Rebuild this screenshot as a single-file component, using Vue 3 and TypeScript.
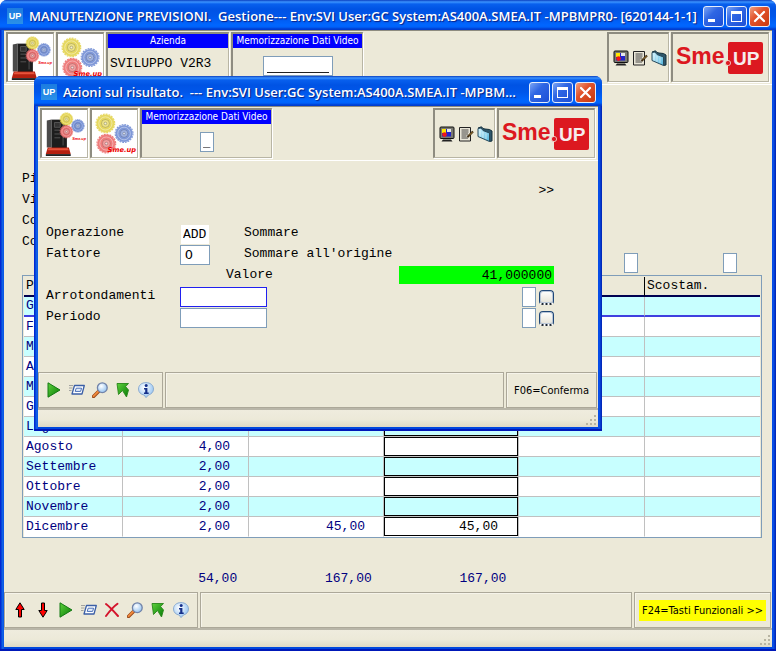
<script setup lang="ts">
import { ref } from 'vue'

interface MonthRow {
  name: string
  base: string
  previous: string
  forecast: string
}

const months = ref<MonthRow[]>([
  { name: 'Gennaio', base: '', previous: '', forecast: '' },
  { name: 'Febbraio', base: '', previous: '', forecast: '' },
  { name: 'Marzo', base: '', previous: '', forecast: '' },
  { name: 'Aprile', base: '', previous: '', forecast: '' },
  { name: 'Maggio', base: '', previous: '', forecast: '' },
  { name: 'Giugno', base: '', previous: '', forecast: '' },
  { name: 'Luglio', base: '', previous: '', forecast: '' },
  { name: 'Agosto', base: '4,00', previous: '', forecast: '' },
  { name: 'Settembre', base: '2,00', previous: '', forecast: '' },
  { name: 'Ottobre', base: '2,00', previous: '', forecast: '' },
  { name: 'Novembre', base: '2,00', previous: '', forecast: '' },
  { name: 'Dicembre', base: '2,00', previous: '45,00', forecast: '45,00' },
])

const headLines: string[] = ['Pi', 'Vi', 'Co', 'Co']
const totals: string[] = ['', '54,00', '167,00', '167,00']

const mainTools: string[] = ['up', 'down', 'play', 'send', 'cross', 'lens', 'back', 'info']
const dialogTools: string[] = ['play', 'send', 'lens', 'back', 'info']
const sideTools: string[] = ['monitor', 'notes', 'folder']

const operation = ref('ADD')
const factor = ref('O')
const rounding = ref('')
const roundingCode = ref('')
const period = ref('')
const periodCode = ref('')
const filterA = ref('')
const filterB = ref('')
const storeMain = ref('')
const storeDialog = ref('_')
</script>

<template>
  <svg class="defs" width="0" height="0" aria-hidden="true">
    <defs>
      <linearGradient id="g-green" x1="0" y1="0" x2="1" y2="1">
        <stop offset="0" stop-color="#5fd23c" /><stop offset="1" stop-color="#067a06" />
      </linearGradient>
      <radialGradient id="g-glass" cx=".4" cy=".35" r=".7">
        <stop offset="0" stop-color="#ffffff" /><stop offset="1" stop-color="#8fc0f0" />
      </radialGradient>
      <linearGradient id="g-folder" x1="0" y1="0" x2="1" y2="1">
        <stop offset="0" stop-color="#d8f6ff" /><stop offset="1" stop-color="#4fb4dc" />
      </linearGradient>
    </defs>
    <symbol id="up" viewBox="0 0 16 16">
      <path d="M8 .8 12.2 7.500H9.500V15H6.500V7.500H3.800Z" fill="#f00" stroke="#000" />
    </symbol>
    <symbol id="down" viewBox="0 0 16 16">
      <path d="M8 15.200 3.800 8.500H6.500V1H9.500V8.500H12.200Z" fill="#f00" stroke="#000" />
    </symbol>
    <symbol id="play" viewBox="0 0 16 16">
      <path d="M2 .8 14 8 2 15.200Z" fill="url(#g-green)" stroke="#157a15" />
    </symbol>
    <symbol id="send" viewBox="0 0 16 16">
      <path d="M5.500 3.500H15.300L13 12H3Z" fill="#fff" stroke="#3b5fa6" stroke-width="1.300" stroke-linejoin="round" />
      <path d="M7.200 6.200H12.600L11.600 9.400H6.200Z" fill="#e3edfb" stroke="#4a70b8" />
      <path d="M0 3.500H4M0 6H3.500M0 8.500H2.500" stroke="#9a9a9a" stroke-width=".9" />
    </symbol>
    <symbol id="cross" viewBox="0 0 16 16">
      <path d="M2 2C6 5 10 9.500 14 14M13.500 1.800C9 5 5 10 2 14" fill="none" stroke="#d4142c" stroke-width="2" stroke-linecap="round" />
    </symbol>
    <symbol id="lens" viewBox="0 0 16 16">
      <path d="M1.500 14.500 6.500 9.500" stroke="#9a4a1c" stroke-width="3.400" stroke-linecap="round" />
      <path d="M1.600 14.100 6.200 9.500" stroke="#f08a3c" stroke-width="1.800" stroke-linecap="round" />
      <circle cx="10.300" cy="5.700" r="4.900" fill="url(#g-glass)" stroke="#7283a8" stroke-width="1.300" />
    </symbol>
    <symbol id="back" viewBox="0 0 16 16">
      <path d="M2 1.500H13.500L10.600 4.600 13.500 8 11.500 15 7.500 8.500 3.500 12.500Z" fill="url(#g-green)" stroke="#28861a" stroke-width=".9" stroke-linejoin="round" />
    </symbol>
    <symbol id="info" viewBox="0 0 16 16">
      <path d="M8 .6C12.400 .6 15.500 3.200 15.500 7 15.500 10.200 13.200 12.200 10.500 13L8 15.600 6.200 13.100C2.900 12.500 .5 10.300 .5 7 .5 3.200 3.600 .6 8 .6Z" fill="url(#g-glass)" stroke="#86a6cc" stroke-width=".9" />
      <circle cx="8.200" cy="3.400" r="1.500" fill="#15308a" />
      <path d="M6 6H9.400V10.500H10.700V12H6V10.500H7.200V7.400H6Z" fill="#15308a" />
    </symbol>
    <symbol id="monitor" viewBox="0 0 16 16">
      <rect x="1" y="1" width="14" height="11.500" rx="1" fill="#7a7a72" stroke="#111" />
      <rect x="3" y="3" width="9" height="7.500" fill="#2323c8" />
      <rect x="3" y="3" width="4" height="4" fill="#ffe600" />
      <circle cx="5.500" cy="8.600" r="2.300" fill="#f01818" />
      <rect x="8" y="3" width="4" height="3" fill="#e8e8e8" />
      <path d="M4 13.500H12L13.500 15.500H2.500Z" fill="#222" />
    </symbol>
    <symbol id="notes" viewBox="0 0 16 16">
      <path d="M1.500 1.500H12.500V15H1.500Z" fill="#e9e6d8" stroke="#222" />
      <path d="M3.500 4H10.500M3.500 6H10.500M3.500 8H10M3.500 10H8.500M3.500 12H10" stroke="#333" stroke-width=".9" />
      <path d="M9.500 11 15 5.500" stroke="#3a2a10" stroke-width="2.200" />
      <path d="M11 9.500 14.500 6" stroke="#c89848" stroke-width=".8" />
    </symbol>
    <symbol id="folder" viewBox="0 0 16 16">
      <path d="M1 2 4.500 .8 6 2.500 8 3 12.500 3.500 15 5V15L12.500 15.500" fill="#2e566a" stroke="#14303c" />
      <path d="M1 2.500 4 2 6 4.500 12.500 7V15.500L1 10.500Z" fill="url(#g-folder)" stroke="#28485a" />
      <path d="M3 4.500V10.500M6 6V12M9 7.500V13.200" stroke="#fff" stroke-width=".7" opacity=".7" />
    </symbol>
    <symbol id="gear" viewBox="0 0 24 24">
      <circle cx="12" cy="12" r="10.600" fill="none" stroke="currentColor" stroke-width="1.400" stroke-dasharray="2.200 1.130" />
      <circle cx="12" cy="12" r="10.200" fill="currentColor" />
      <circle cx="12" cy="12" r="7.500" fill="none" stroke="#fff" stroke-opacity=".45" />
      <circle cx="12" cy="12" r="4.500" fill="#fff" fill-opacity=".25" stroke="#000" stroke-opacity=".2" />
      <circle cx="12" cy="12" r="1.500" fill="#fff" fill-opacity=".6" stroke="#000" stroke-opacity=".25" />
    </symbol>
    <symbol id="server" viewBox="0 0 47 47">
      <path d="M5 10 10 9V38H5Z" fill="#4a4a4a" />
      <path d="M10 9H26V39H10Z" fill="#1d1d1d" />
      <path d="M13 12H19V17H13ZM13 20H19M13 24H19M13 28H19M22 12V36" stroke="#555" fill="#333" />
      <path d="M6 38H28L30 45H4Z" fill="#b5200f" />
      <path d="M7 39H27L28 41H6Z" fill="#e8543c" />
      <path d="M4 45H30V47H4Z" fill="#222" />
      <use href="#gear" x="18" y="1" width="15" height="15" color="#e4d452" />
      <use href="#gear" x="30" y="8" width="15" height="15" color="#7590d4" />
      <use href="#gear" x="18" y="14" width="15" height="15" color="#e87070" />
      <text x="46" y="30" text-anchor="end" font-family="Liberation Sans" font-weight="700" font-style="italic" font-size="4" fill="#e00">Sme.up</text>
    </symbol>
    <symbol id="gears" viewBox="0 0 47 47">
      <use href="#gear" x="3" y="2" width="22" height="22" color="#e6d860" />
      <use href="#gear" x="23" y="13" width="21" height="21" color="#7f98d8" />
      <use href="#gear" x="4" y="23" width="22" height="22" color="#ee7c7c" />
      <text x="46" y="43" text-anchor="end" font-family="DejaVu Sans" font-weight="700" font-style="italic" font-size="7" fill="#e00">Sme.up</text>
    </symbol>
    <symbol id="logo" viewBox="0 0 90 36">
      <rect x="53" y="2" width="35" height="32" rx="2" fill="#dc1820" />
      <text x="1" y="24" font-family="Liberation Sans" font-weight="700" font-size="23" fill="#dc1820">Sme</text>
      <circle cx="53" cy="23" r="2.600" fill="#dc1820" stroke="#f2e6dc" stroke-width=".8" />
      <text x="58" y="25" font-family="Liberation Sans" font-weight="700" font-size="19" fill="#f6ecec">UP</text>
    </symbol>
  </svg>

  <div class="desktop">
    <main class="window main-window">
      <header class="titlebar">
        <span class="badge">UP</span>
        <h1 class="title">MANUTENZIONE PREVISIONI.&nbsp; Gestione--- Env:SVI User:GC System:AS400A.SMEA.IT -MPBMPR0- [620144-1-1]</h1>
        <button class="cap" type="button" aria-label="Riduci"><i class="min"></i></button>
        <button class="cap" type="button" aria-label="Ingrandisci"><i class="max"></i></button>
        <button class="cap close" type="button" aria-label="Chiudi">
          <svg viewBox="0 0 13 13" width="13" height="13"><path d="M2 2 11 11M11 2 2 11" stroke="#fff" stroke-width="2.200" stroke-linecap="round" /></svg>
        </button>
      </header>

      <section class="toolbar">
        <div class="cell pic"><svg width="45" height="47"><use href="#server" /></svg></div>
        <div class="cell pic"><svg width="45" height="47"><use href="#gears" /></svg></div>
        <div class="cell field-cell company">
          <div class="caption">Azienda</div>
          <div class="mono company-name">SVILUPPO V2R3</div>
        </div>
        <div class="cell field-cell">
          <label class="caption" for="store-main">Memorizzazione Dati Video</label>
          <input id="store-main" v-model="storeMain" class="mono box store-wide" type="text" />
        </div>
        <div class="spacer"></div>
        <div class="cell side">
          <button v-for="t in sideTools" :key="t" class="tool" type="button" :aria-label="t">
            <svg width="16" height="16"><use :href="'#' + t" /></svg>
          </button>
        </div>
        <div class="cell brand"><svg width="90" height="36"><use href="#logo" /></svg></div>
      </section>

      <section class="content main-content">
        <div class="head-lines mono">
          <p v-for="(line, i) in headLines" :key="i">{{ line }}</p>
        </div>
        <div class="filters">
          <input v-model="filterA" class="box code" type="text" aria-label="Filtro differenza" />
          <input v-model="filterB" class="box code" type="text" aria-label="Filtro scostamento" />
        </div>
        <div class="table-frame">
          <table class="mono">
            <colgroup>
              <col class="c-name" /><col class="c-base" /><col class="c-num" /><col class="c-num" /><col class="c-base" /><col />
            </colgroup>
            <thead>
              <tr>
                <th>Periodo</th><th></th><th></th><th></th><th></th><th>Scostam.</th>
              </tr>
            </thead>
            <tbody>
              <tr v-for="(m, i) in months" :key="m.name" :class="{ current: i === 0 }">
                <td>{{ m.name }}</td>
                <td class="num">{{ m.base }}</td>
                <td class="num">{{ m.previous }}</td>
                <td class="edit"><input v-model="m.forecast" class="mono" type="text" :aria-label="m.name" /></td>
                <td></td>
                <td></td>
              </tr>
            </tbody>
          </table>
        </div>
        <div class="totals mono">
          <span v-for="(t, i) in totals" :key="i">{{ t }}</span>
        </div>
      </section>

      <footer>
        <div class="actions">
          <div class="pane tools">
            <button v-for="t in mainTools" :key="t" class="tool" type="button" :aria-label="t">
              <svg width="16" height="16"><use :href="'#' + t" /></svg>
            </button>
          </div>
          <div class="pane fill"></div>
          <div class="pane key-pane"><button class="key lit" type="button">F24=Tasti Funzionali &gt;&gt;</button></div>
        </div>
        <div class="status">
          <svg width="12" height="12" fill="#b8b4a2"><path d="M8 0h2v2h-2zM4 4h2v2h-2zM8 4h2v2h-2zM0 8h2v2h-2zM4 8h2v2h-2zM8 8h2v2h-2z" /></svg>
        </div>
      </footer>
    </main>

    <section class="window dialog" role="dialog" aria-label="Azioni sul risultato">
      <header class="titlebar">
        <span class="badge">UP</span>
        <h2 class="title">Azioni sul risultato.&nbsp; --- Env:SVI User:GC System:AS400A.SMEA.IT -MPBM...</h2>
        <button class="cap" type="button" aria-label="Riduci"><i class="min"></i></button>
        <button class="cap" type="button" aria-label="Ingrandisci"><i class="max"></i></button>
        <button class="cap close" type="button" aria-label="Chiudi">
          <svg viewBox="0 0 13 13" width="13" height="13"><path d="M2 2 11 11M11 2 2 11" stroke="#fff" stroke-width="2.200" stroke-linecap="round" /></svg>
        </button>
      </header>

      <div class="toolbar">
        <div class="cell pic"><svg width="45" height="47"><use href="#server" /></svg></div>
        <div class="cell pic"><svg width="45" height="47"><use href="#gears" /></svg></div>
        <div class="cell field-cell">
          <label class="caption" for="store-dialog">Memorizzazione Dati Video</label>
          <input id="store-dialog" v-model="storeDialog" class="mono box code" type="text" />
        </div>
        <div class="spacer"></div>
        <div class="cell side">
          <button v-for="t in sideTools" :key="t" class="tool" type="button" :aria-label="t">
            <svg width="16" height="16"><use :href="'#' + t" /></svg>
          </button>
        </div>
        <div class="cell brand"><svg width="90" height="36"><use href="#logo" /></svg></div>
      </div>

      <form class="content form mono" @submit.prevent>
        <button class="more mono" type="button">&gt;&gt;</button>
        <div class="row">
          <label for="operation">Operazione</label>
          <input id="operation" v-model="operation" class="mono plain" type="text" />
          <span class="note">Sommare</span>
        </div>
        <div class="row">
          <label for="factor">Fattore</label>
          <input id="factor" v-model="factor" class="mono box short" type="text" />
          <span class="note">Sommare all'origine</span>
        </div>
        <div class="row">
          <label class="value-label" for="value">Valore</label>
          <output id="value" class="value">41,000000</output>
        </div>
        <div class="row">
          <label for="rounding">Arrotondamenti</label>
          <input id="rounding" v-model="rounding" class="mono box long active" type="text" />
          <input v-model="roundingCode" class="mono box code right" type="text" aria-label="Codice arrotondamento" />
          <button class="pick" type="button" aria-label="Scegli arrotondamento"></button>
        </div>
        <div class="row">
          <label for="period">Periodo</label>
          <input id="period" v-model="period" class="mono box long" type="text" />
          <input v-model="periodCode" class="mono box code right" type="text" aria-label="Codice periodo" />
          <button class="pick" type="button" aria-label="Scegli periodo"></button>
        </div>
      </form>

      <footer>
        <div class="actions">
          <div class="pane tools">
            <button v-for="t in dialogTools" :key="t" class="tool" type="button" :aria-label="t">
              <svg width="16" height="16"><use :href="'#' + t" /></svg>
            </button>
          </div>
          <div class="pane fill"></div>
          <div class="pane key-pane"><button class="key" type="button">F06=Conferma</button></div>
        </div>
        <div class="status">
          <svg width="12" height="12" fill="#b8b4a2"><path d="M8 0h2v2h-2zM4 4h2v2h-2zM8 4h2v2h-2zM0 8h2v2h-2zM4 8h2v2h-2zM8 8h2v2h-2z" /></svg>
        </div>
      </footer>
    </section>
  </div>
</template>

<style>
body {
  margin: 0;
  background: #fff;
}
</style>

<style scoped>
* {
  box-sizing: border-box;
}
.defs {
  position: absolute;
}
svg {
  display: block;
}
button {
  padding: 0;
  border: 0;
  background: none;
  color: inherit;
}
.desktop {
  position: relative;
  display: flex;
  min-height: 100vh;
  padding: 0 1px 1px 0;
  font-family: "DejaVu Sans Condensed", "DejaVu Sans", sans-serif;
  font-size: 11px;
  color: #000;
}
.mono {
  font-family: "Liberation Mono", monospace;
  font-size: 13px;
}
.window {
  display: flex;
  flex-direction: column;
  padding: 0 4px 4px;
  border-radius: 7px 7px 0 0;
  background: linear-gradient(90deg, #0019cf, #0855dd 2px, #166aee 3px, #0048dd 4px, #0048dd 50%, #0044e0 calc(100% - 4px), #0a55ee calc(100% - 3px), #0020b0);
  box-shadow: inset 0 -2px 0 #0018b8;
}
.main-window {
  flex: 1;
  min-width: 0;
}
.dialog {
  position: absolute;
  left: 34px;
  top: 76px;
  width: 568px;
  height: 355px;
}
.titlebar {
  display: flex;
  align-items: center;
  gap: 2px;
  height: 30px;
  margin: 0 -4px;
  padding: 2px 6px 0 7px;
  border-radius: 7px 7px 0 0;
  background: linear-gradient(#0a3fc0, #3b93ff 2px, #0860ee 4px, #0053e4 9px, #0056ea 16px, #0066ff 25px, #0062fa 27px, #003dd0 29px, #003dd0);
  color: #fff;
}
.badge {
  width: 16px;
  height: 16px;
  margin-right: 4px;
  background: linear-gradient(#1c7ce0, #2a90e8);
  font-family: "Liberation Sans", sans-serif;
  font-size: 9px;
  font-weight: 700;
  line-height: 16px;
  text-align: center;
}
.title {
  flex: 1;
  min-width: 0;
  margin: 0;
  overflow: hidden;
  font-family: "Open Sans", "Noto Sans", sans-serif;
  font-size: 13px;
  font-weight: 600;
  line-height: 20px;
  white-space: nowrap;
  text-shadow: 1px 1px 1px #0a1f80;
}
.cap {
  display: flex;
  flex: none;
  align-items: center;
  justify-content: center;
  width: 21px;
  height: 21px;
  border: 1px solid #e6eefc;
  border-radius: 3px;
  background: linear-gradient(135deg, #7ba4f4, #2f66e4 40%, #1d4fd6);
}
.close {
  background: linear-gradient(135deg, #f0a080, #e2532c 40%, #c8380f);
}
.min {
  width: 7px;
  height: 3px;
  margin: 9px 4px 0 0;
  background: #fff;
}
.max {
  width: 11px;
  height: 11px;
  border: 1px solid #fff;
  border-top-width: 3px;
}
.toolbar {
  display: flex;
  gap: 2px;
  height: 55px;
  padding: 1px 3px 3px 2px;
  border-top: 1px solid #8e8c80;
  border-bottom: 1px solid #fff;
  background: #ece9d8;
}
.cell {
  height: 50px;
  border: 2px solid;
  border-color: #8e8c80 #b8b5a4 #b8b5a4 #8e8c80;
  border-right-width: 1px;
  border-bottom-width: 1px;
  box-shadow: 1px 1px 0 #fff;
}
.pic {
  width: 48px;
  background: #fff;
  overflow: hidden;
}
.field-cell {
  display: flex;
  flex-direction: column;
  align-items: center;
  width: 132px;
  overflow: hidden;
}
.company {
  width: 123px;
}
.caption {
  align-self: stretch;
  background: #00f;
  color: #fff;
  font-size: 10px;
  line-height: 14px;
  text-align: center;
  white-space: nowrap;
}
.company-name {
  align-self: flex-start;
  margin-top: 7px;
  padding-left: 2px;
  line-height: 17px;
  white-space: nowrap;
}
.box {
  height: 20px;
  padding: 0 4px;
  border: 1px solid #7f9db9;
  background: #fff;
}
.field-cell .box {
  margin-top: 8px;
}
.store-wide {
  width: 70px;
  background: linear-gradient(#222, #222) 3px 15px / 62px 1px no-repeat, #fff;
}
.code {
  width: 14px;
  padding: 0 2px;
}
.spacer {
  flex: 1;
}
.side {
  display: flex;
  align-items: center;
  gap: 3px;
  width: 62px;
  padding-left: 4px;
}
.side .tool {
  flex: none;
}
.brand {
  display: flex;
  align-items: center;
  width: 98px;
  padding-left: 2px;
  overflow: hidden;
}
.content {
  flex: 1;
  background: #ece9d8;
}
.main-content {
  padding: 85px 10px 4px 18px;
}
.head-lines {
  height: 83px;
}
.head-lines p {
  margin: 0 0 4px;
  line-height: 17px;
}
.filters {
  display: flex;
  justify-content: flex-end;
  gap: 85px;
  padding-right: 25px;
}
.table-frame {
  margin-top: 2px;
  padding: 1px 1px 0;
  border: 1px solid #7f9db9;
}
table {
  width: 100%;
  table-layout: fixed;
  border-collapse: separate;
  border-spacing: 0;
}
.c-name {
  width: 98px;
}
.c-base {
  width: 126px;
}
.c-num {
  width: 135px;
}
th {
  height: 20px;
  padding: 0 2px;
  border-bottom: 2px solid #000050;
  border-left: 1px solid #000;
  font-weight: 400;
  line-height: 18px;
  text-align: left;
}
th:first-child {
  border-left: 0;
}
td {
  height: 20px;
  padding: 0 2px;
  border-bottom: 1px solid #c0c0c0;
  border-left: 1px solid #c0c0c0;
  background: #fff;
  color: #000080;
  line-height: 19px;
}
td:first-child {
  border-left: 0;
}
tr:nth-child(odd) td {
  background: #c8ffff;
}
tr:last-child td {
  border-bottom-color: #fff;
}
tr.current td {
  border-bottom: 2px solid #4040e0;
  line-height: 18px;
}
td.num {
  padding-right: 18px;
  text-align: right;
}
td.edit {
  padding: 0;
}
.edit input {
  display: block;
  width: 100%;
  height: 19px;
  padding: 0 19px;
  border: 1px solid #000;
  background: transparent;
  color: #000;
  text-align: right;
}
.current .edit input {
  height: 18px;
}
.totals {
  display: grid;
  grid-template-columns: 13fr 17fr 18fr 18fr 33fr;
  margin-top: 32px;
  color: #000080;
  line-height: 18px;
}
.totals span {
  padding-right: 9px;
  text-align: right;
}
footer {
  background: #ece9d8;
}
.actions {
  display: flex;
  gap: 2px;
  height: 36px;
  padding-right: 1px;
}
.pane {
  display: flex;
  align-items: center;
  border: 1px solid #aca899;
  box-shadow: inset 1px 1px 0 #f6f4ea;
}
.tools {
  gap: 7px;
  padding: 0 8px 0 7px;
}
.fill {
  flex: 1;
}
.key-pane {
  padding: 0 4px;
}
.key {
  height: 21px;
  padding: 0 3px;
  font-family: inherit;
  font-size: 11px;
  white-space: nowrap;
}
.lit {
  background: #ff0;
}
.status {
  display: flex;
  align-items: flex-end;
  justify-content: flex-end;
  height: 19px;
  border-top: 2px solid #b9b6a8;
  background: linear-gradient(#efecde, #ece9d8 60%, #dedac6);
}
.form {
  padding: 21px 44px 0 8px;
  line-height: 17px;
}
.more {
  display: block;
  margin: 0 0 25px auto;
  line-height: 17px;
}
.row {
  display: flex;
  align-items: flex-start;
  height: 21px;
}
.row label {
  width: 134px;
}
.row .value-label {
  width: auto;
  margin-left: 180px;
}
.plain {
  width: 28px;
  height: 19px;
  margin: 1px 1px 0;
  padding: 0 2px;
  border: 0;
  background: #fff;
}
.short {
  width: 30px;
}
.long {
  width: 87px;
}
.active {
  border-color: #2020f0;
}
.note {
  margin-left: auto;
  width: 310px;
}
.value {
  width: 155px;
  height: 18px;
  margin-left: auto;
  padding-right: 2px;
  background: #0f0;
  line-height: 19px;
  text-align: right;
}
.right {
  margin-left: auto;
}
.pick {
  width: 15px;
  height: 15px;
  margin: 3px 0 0 3px;
  border: 1px solid #1f4778;
  border-bottom: 2px dotted #1a2430;
  border-radius: 4px;
  background: linear-gradient(#fff, #e6e3d6);
  box-shadow: inset 0 0 0 1px #b8c6d8;
}
</style>
